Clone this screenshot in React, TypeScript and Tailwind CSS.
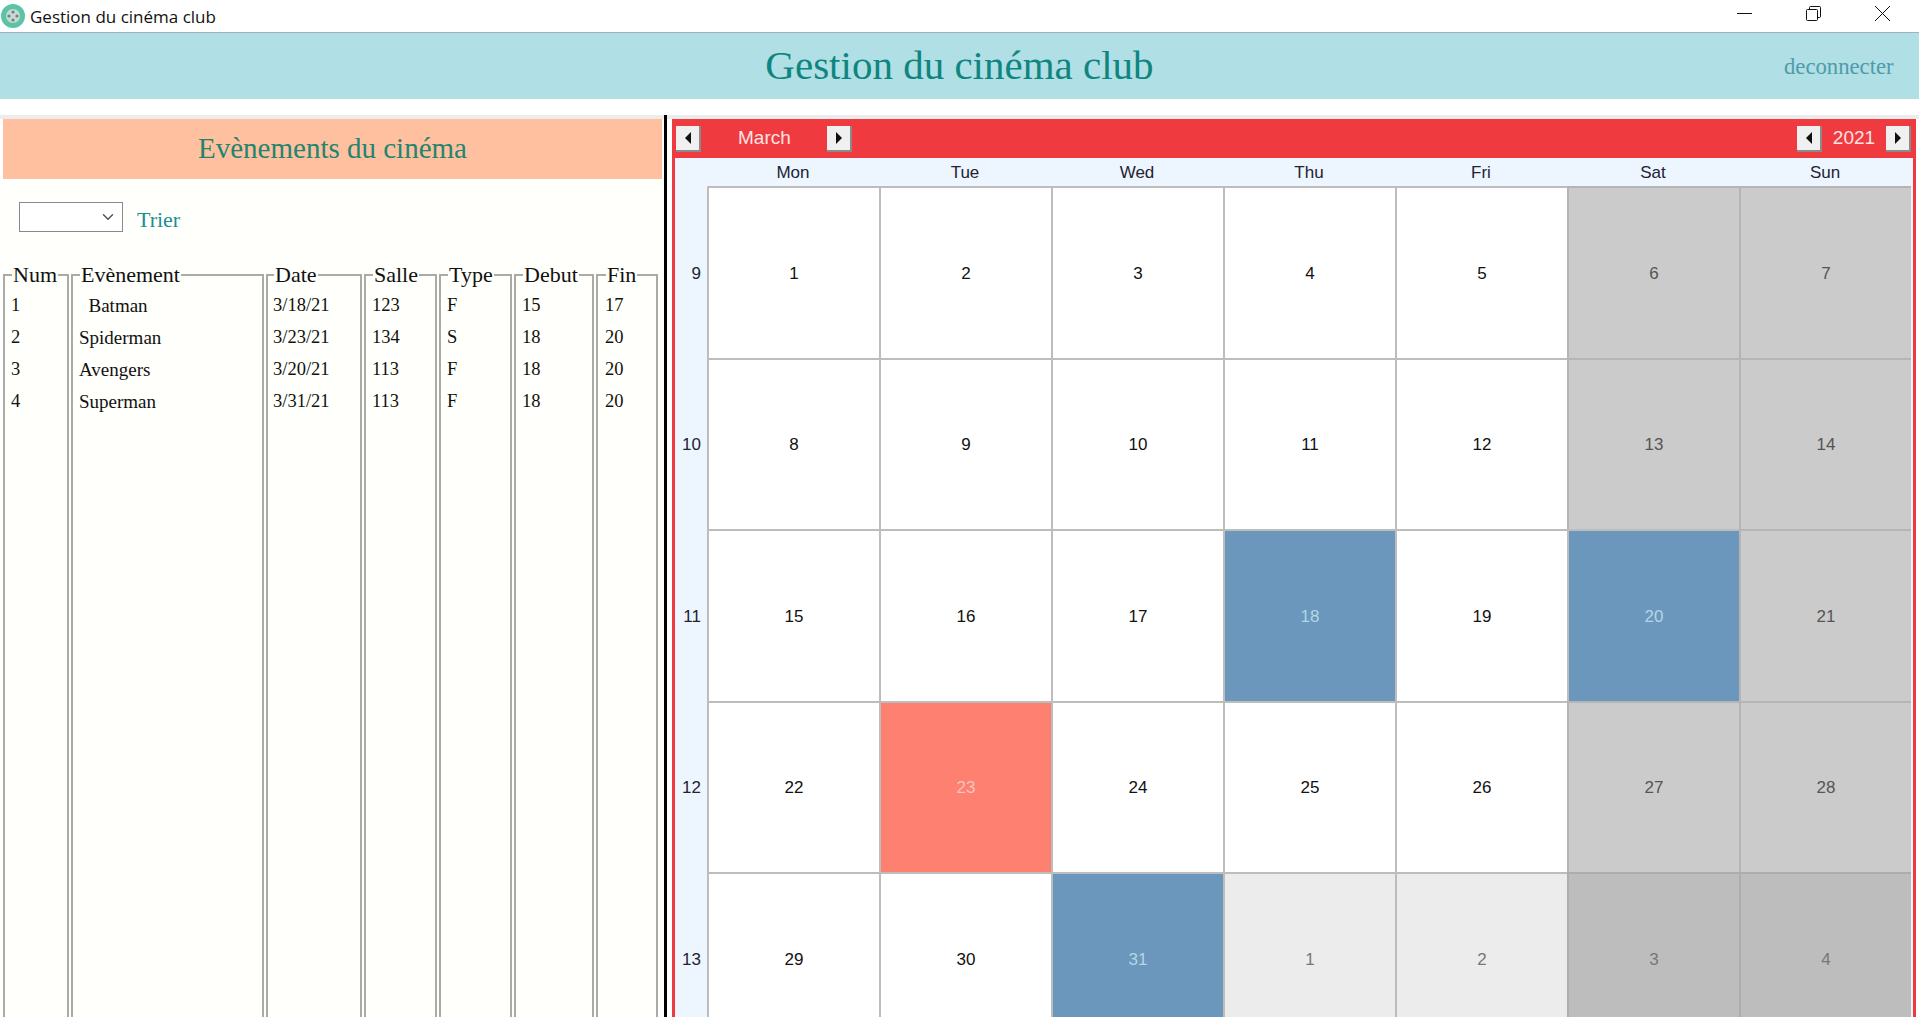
import { ChevronDown } from "lucide-react";

const columns = [
  { title: "Num", width: "w-[66px]", pad: "pl-[6px]", rows: ["1", "2", "3", "4"] },
  { title: "Evènement", width: "w-[193px]", pad: "pl-[6px]", rows: ["\u00a0\u00a0Batman", "Spiderman", "Avengers", "Superman"] },
  { title: "Date", width: "w-[96px]", pad: "pl-[5px]", rows: ["3/18/21", "3/23/21", "3/20/21", "3/31/21"] },
  { title: "Salle", width: "w-[73px]", pad: "pl-[6px]", rows: ["123", "134", "113", "113"] },
  { title: "Type", width: "w-[73px]", pad: "pl-[6px]", rows: ["F", "S", "F", "F"] },
  { title: "Debut", width: "w-[80px]", pad: "pl-[6px]", rows: ["15", "18", "18", "18"] },
  { title: "Fin", width: "w-[62px]", pad: "pl-[7px]", rows: ["17", "20", "20", "20"] },
];

const weekdays = ["Mon", "Tue", "Wed", "Thu", "Fri", "Sat", "Sun"];
const weeks = [
  { n: 9, days: [1, 2, 3, 4, 5, 6, 7] },
  { n: 10, days: [8, 9, 10, 11, 12, 13, 14] },
  { n: 11, days: [15, 16, 17, 18, 19, 20, 21] },
  { n: 12, days: [22, 23, 24, 25, 26, 27, 28] },
  { n: 13, days: [29, 30, 31, 1, 2, 3, 4] },
];

function dayClass(week: number, col: number, day: number) {
  const outside = week === 13 && col >= 3;
  if (outside && col >= 5) return "bg-[#bdbdbd] text-[#777777] border-[#adadad]";
  if (outside) return "bg-[#ececec] text-[#777777] border-[#bdbdbd]";
  if (day === 23) return "bg-[#fd8070] text-[#f6c4bc] border-[#bdbdbd]";
  if (day === 18 || day === 20 || day === 31) return "bg-[#6a97bb] text-[#b4d6e6] border-[#bdbdbd]";
  if (col >= 5) return "bg-[#cbcbcb] text-[#555555] border-[#b5b5b5]";
  return "bg-white text-[#111111] border-[#bdbdbd]";
}

function ArrowButton({ dir }: { dir: "left" | "right" }) {
  return (
    <button className="w-[25px] h-[26px] flex items-center justify-center bg-[#f0f0f0] border-r-2 border-b-2 border-[#8a8a8a]">
      <svg width="8" height="12" viewBox="0 0 8 12">
        <path d={dir === "left" ? "M7 0 L1 6 L7 12 Z" : "M1 0 L7 6 L1 12 Z"} fill="#111" />
      </svg>
    </button>
  );
}

function TitleBar() {
  return (
    <div className="h-[33px] shrink-0 flex items-center bg-white border-b border-[#9ab4bb] font-['Open_Sans',sans-serif]">
      <svg width="24" height="24" viewBox="0 0 24 24" className="ml-px">
        <circle cx="12" cy="12" r="12" fill="#5cc4a6" />
        <circle cx="12" cy="12" r="7" fill="#c8d8d4" />
        <circle cx="12" cy="8" r="1.6" fill="#6b8580" />
        <circle cx="12" cy="16" r="1.6" fill="#6b8580" />
        <circle cx="8" cy="12" r="1.6" fill="#6b8580" />
        <circle cx="16" cy="12" r="1.6" fill="#6b8580" />
      </svg>
      <span className="ml-[5px] text-[17px] leading-none text-[#111111]">Gestion du cinéma club</span>
      <div className="ml-auto flex items-center pr-[29px] gap-[54px] -translate-y-[3px]">
        <svg width="15" height="15" viewBox="0 0 15 15">
          <path d="M0 7.5 H15" stroke="#111" strokeWidth="1" />
        </svg>
        <svg width="15" height="15" viewBox="0 0 15 15" fill="none" stroke="#111" strokeWidth="1">
          <rect x="0.5" y="3.5" width="11" height="11" rx="1" />
          <path d="M3.5 3 V1.5 a1 1 0 0 1 1 -1 H13.5 a1 1 0 0 1 1 1 V10.5 a1 1 0 0 1 -1 1 H12" />
        </svg>
        <svg width="15" height="15" viewBox="0 0 15 15" stroke="#111" strokeWidth="1">
          <path d="M0 0 L15 15 M15 0 L0 15" />
        </svg>
      </div>
    </div>
  );
}

function EventsPanel() {
  return (
    <div className="w-[659px] ml-[3px] shrink-0 flex flex-col bg-[#fffffb] font-['Liberation_Serif',serif]">
      <div className="h-[60px] shrink-0 flex items-center justify-center bg-[#ffc09f] text-[29px] text-[#23846f]">
        Evènements du cinéma
      </div>
      <div className="flex items-center mt-[21px] ml-[16px]">
        <div className="w-[104px] h-[30px] flex items-center justify-end pr-[5px] border border-[#8a8a8a] bg-white">
          <ChevronDown size={18} color="#555" />
        </div>
        <span className="ml-[14px] text-[22px] translate-y-[3px] text-[#1b8f93]">Trier</span>
      </div>
      <div className="flex gap-[2px] mt-[30px] flex-1 min-h-0">
        {columns.map((c) => (
          <fieldset key={c.title} className={`${c.width} h-[800px] shrink-0 border-2 border-[#aaaaa6] ${c.pad}`}>
            <legend className="ml-[1px] px-[1px] text-[22px] leading-[24px] text-[#111111]">{c.title}</legend>
            <div className="mt-[3px]">
              {c.rows.map((r) => (
                <div key={r} className={`h-[32px] flex items-center ${c.title === "Evènement" ? "text-[19px]" : "text-[18.5px]"} text-[#111111] whitespace-pre`}>
                  {r}
                </div>
              ))}
            </div>
          </fieldset>
        ))}
      </div>
    </div>
  );
}

function CalendarPanel() {
  return (
    <div className="w-[1244px] ml-[5px] shrink-0 flex flex-col border-x-[3px] border-[#ef3b3f] bg-[#edf6ff] font-['Liberation_Sans',sans-serif]">
      <div className="h-[39px] shrink-0 flex items-center bg-[#ef3b3f] pl-[1px] pr-[2px] text-[19px] text-[#fde3e3]">
        <ArrowButton dir="left" />
        <span className="w-[126px] pl-[37px]">March</span>
        <ArrowButton dir="right" />
        <div className="ml-auto flex items-center">
          <ArrowButton dir="left" />
          <span className="w-[64px] text-center">2021</span>
          <ArrowButton dir="right" />
        </div>
      </div>
      <div className="h-[28px] shrink-0 pl-[32px] pt-[2px] grid grid-cols-[repeat(7,172px)] items-center text-[17px] text-[#222233]">
        {weekdays.map((d) => (
          <div key={d} className="text-center">{d}</div>
        ))}
      </div>
      {weeks.map((w) => (
        <div key={w.n} className="h-[171.5px] shrink-0 flex">
          <div className="w-[32px] shrink-0 flex items-center justify-end pr-[6px] pt-[3px] text-[17px] text-[#222233]">{w.n}</div>
          <div className="grid grid-cols-[repeat(7,172px)]">
            {w.days.map((d, i) => (
              <div key={i} className={`flex items-center justify-center pt-[1px] text-[17px] border-t-2 border-l-2 ${dayClass(w.n, i, d)}`}>
                {d}
              </div>
            ))}
          </div>
        </div>
      ))}
    </div>
  );
}

export default function App() {
  return (
    <div className="w-screen h-screen overflow-hidden flex flex-col bg-white">
      <TitleBar />
      <div className="h-[66px] shrink-0 flex items-center bg-[#b0dfe5] font-['Liberation_Serif',serif]">
        <div className="w-[1780px] text-center pl-[139px] text-[41px] text-[#0f857f]">Gestion du cinéma club</div>
        <div className="text-[22.7px] ml-[4px] pt-[2px] text-[#4f9bab]">deconnecter</div>
      </div>
      <div className="mt-[16px] flex-1 min-h-0 flex border-t-4 border-[#ececec]">
        <EventsPanel />
        <div className="ml-[2px] w-[3px] bg-black -mt-[4px] shrink-0" />
        <CalendarPanel />
      </div>
    </div>
  );
}
